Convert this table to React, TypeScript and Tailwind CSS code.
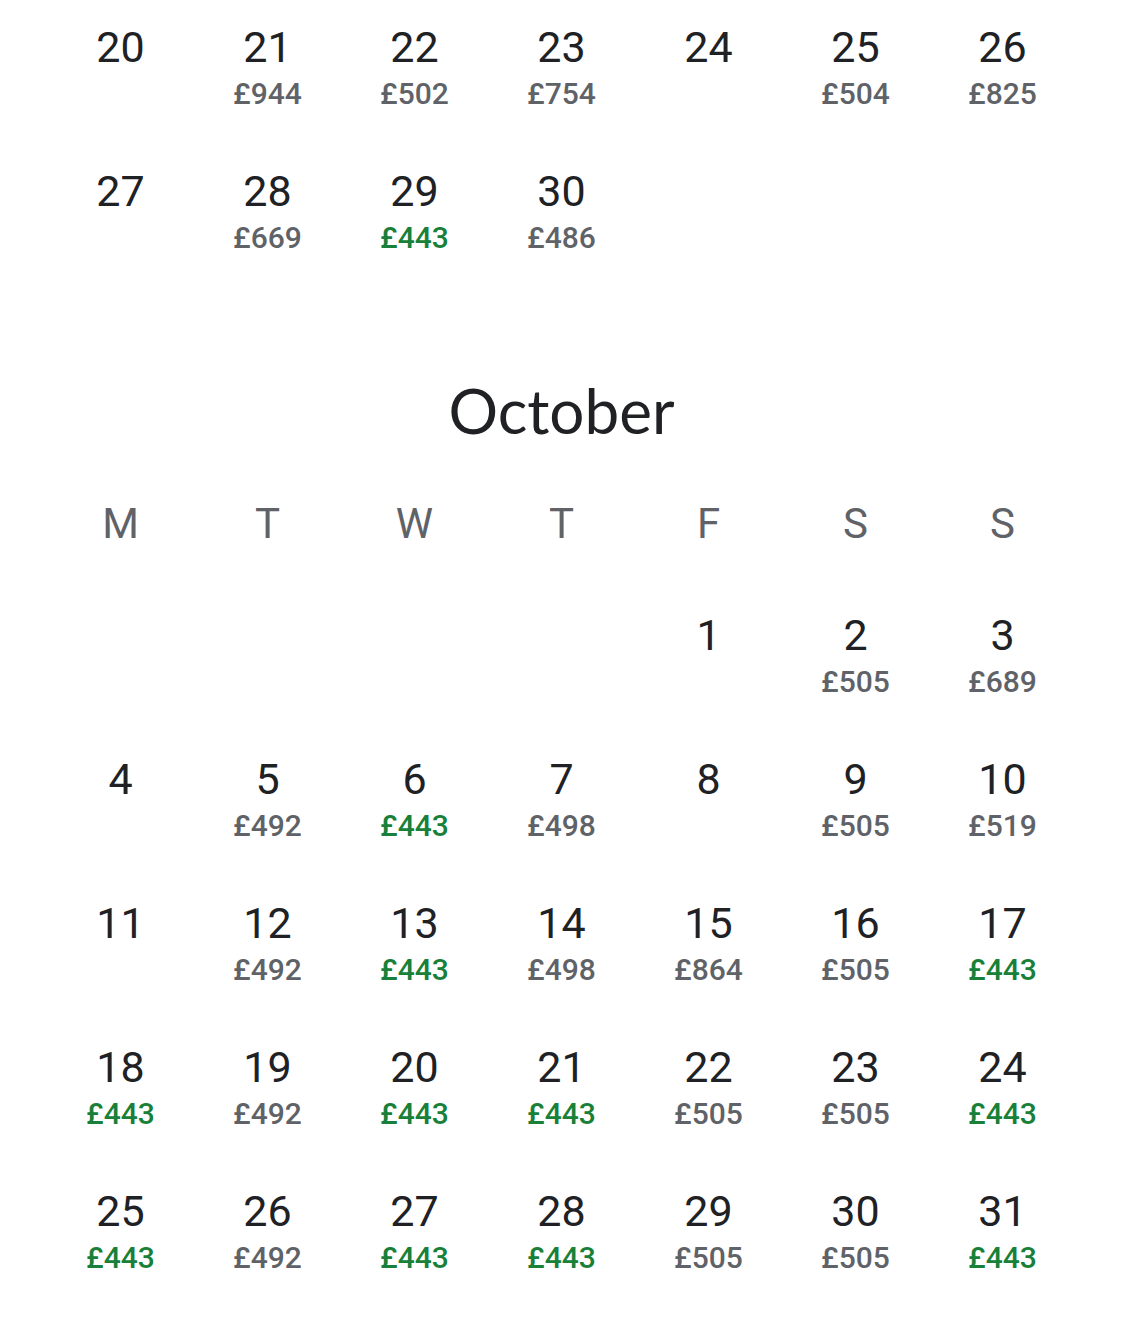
type Day = { d: number | null; p?: string; low?: boolean }

const sept: Day[][] = [
  [
    { d: 20 },
    { d: 21, p: '£944' },
    { d: 22, p: '£502' },
    { d: 23, p: '£754' },
    { d: 24 },
    { d: 25, p: '£504' },
    { d: 26, p: '£825' },
  ],
  [
    { d: 27 },
    { d: 28, p: '£669' },
    { d: 29, p: '£443', low: true },
    { d: 30, p: '£486' },
    { d: null },
    { d: null },
    { d: null },
  ],
]

const oct: Day[][] = [
  [{ d: null }, { d: null }, { d: null }, { d: null }, { d: 1 }, { d: 2, p: '£505' }, { d: 3, p: '£689' }],
  [
    { d: 4 },
    { d: 5, p: '£492' },
    { d: 6, p: '£443', low: true },
    { d: 7, p: '£498' },
    { d: 8 },
    { d: 9, p: '£505' },
    { d: 10, p: '£519' },
  ],
  [
    { d: 11 },
    { d: 12, p: '£492' },
    { d: 13, p: '£443', low: true },
    { d: 14, p: '£498' },
    { d: 15, p: '£864' },
    { d: 16, p: '£505' },
    { d: 17, p: '£443', low: true },
  ],
  [
    { d: 18, p: '£443', low: true },
    { d: 19, p: '£492' },
    { d: 20, p: '£443', low: true },
    { d: 21, p: '£443', low: true },
    { d: 22, p: '£505' },
    { d: 23, p: '£505' },
    { d: 24, p: '£443', low: true },
  ],
  [
    { d: 25, p: '£443', low: true },
    { d: 26, p: '£492' },
    { d: 27, p: '£443', low: true },
    { d: 28, p: '£443', low: true },
    { d: 29, p: '£505' },
    { d: 30, p: '£505' },
    { d: 31, p: '£443', low: true },
  ],
]

const weekdays = ['M', 'T', 'W', 'T', 'F', 'S', 'S']

function Cell({ day }: { day: Day }) {
  if (day.d === null) return <div className="h-[144px]" />
  return (
    <div className="flex h-[144px] flex-col items-center">
      <div className="h-[52px] text-[43px] leading-[52px] text-[#202124]">{day.d}</div>
      {day.p && (
        <div
          className={`mt-px h-[40px] text-[30px] font-medium leading-[40px] ${
            day.low ? 'text-[#188038]' : 'text-[#5f6368]'
          }`}
        >
          {day.p}
        </div>
      )}
    </div>
  )
}

function Weeks({ rows }: { rows: Day[][] }) {
  return (
    <div className="grid grid-cols-[repeat(7,147px)]">
      {rows.flat().map((day, i) => (
        <Cell key={i} day={day} />
      ))}
    </div>
  )
}

export default function App() {
  return (
    <div className="min-h-[1335px] bg-white pl-[47px] pt-[21px] font-['Roboto',sans-serif]">
      <Weeks rows={sept} />
      <div className="mt-[61px] w-[1029px] text-center font-['Lato',sans-serif] text-[62px] leading-[80px] text-[#202124]">
        October
      </div>
      <div className="mt-[44px] grid grid-cols-[repeat(7,147px)]">
        {weekdays.map((w, i) => (
          <div key={i} className="h-[60px] text-center text-[42px] leading-[60px] text-[#5f6368]">
            {w}
          </div>
        ))}
      </div>
      <div className="mt-[55px]">
        <Weeks rows={oct} />
      </div>
    </div>
  )
}
